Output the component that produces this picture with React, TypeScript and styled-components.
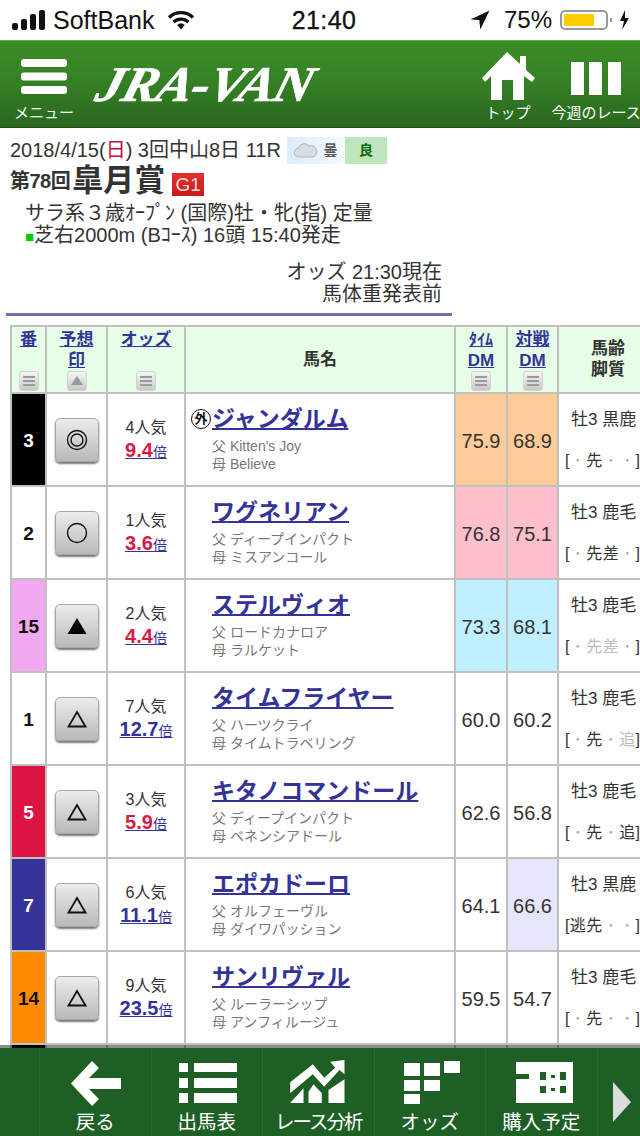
// App.tsx
import React from 'react';
import styled, { createGlobalStyle } from 'styled-components';

const GlobalStyle = createGlobalStyle`
  html, body {
    margin: 0;
    padding: 0;
    background: #fff;
    font-family: "Liberation Sans", "Noto Sans CJK JP", sans-serif;
  }
`;

const Screen = styled.div`
  width: 640px;
  height: 1136px;
  display: flex;
  flex-direction: column;
  overflow: hidden;
  color: #333;
`;

/* status bar */
const StatusBar = styled.div`
  height: 40px;
  flex: none;
  display: grid;
  grid-template-columns: 1fr auto 1fr;
  align-items: center;
  padding: 0 10px 0 12px;
  color: #111;
  font-size: 24px;
`;
const StatusLeft = styled.div`
  display: flex;
  align-items: center;
  gap: 8px;
`;
const StatusRight = styled.div`
  display: flex;
  align-items: center;
  justify-content: flex-end;
  gap: 8px;
`;
const Clock = styled.div`
  font-weight: 500;
  font-size: 25px;
  letter-spacing: 0.4px;
  -webkit-text-stroke: 0.3px #111;
  margin-left: 6px;
`;
const Carrier = styled.span`
  font-size: 25px;
  margin-right: 5px;
`;
const LocationArrow = styled.svg`
  display: block;
  fill: #111;
  margin-right: 6px;
`;
const Battery = styled.div`
  width: 48px;
  height: 20px;
  box-sizing: border-box;
  border: 2px solid #999;
  border-radius: 5px;
  padding: 2px;
`;
const BatteryFill = styled.div`
  height: 100%;
  background: #fc0;
  border-radius: 1px;
`;
const Charging = styled.svg`
  display: block;
  margin-left: -6px;
`;

/* green header */
const Header = styled.header`
  height: 88px;
  flex: none;
  box-sizing: border-box;
  display: flex;
  align-items: stretch;
  background: linear-gradient(#3b8d28 0%, #358226 45%, #2a671e 100%);
  border-top: 1px solid #6aa85a;
  border-bottom: 1px solid #1c4e14;
  color: #fff;
`;
const NavItem = styled.div<{ $w: number; $after?: number }>`
  width: ${(p) => p.$w}px;
  margin-right: ${(p) => p.$after ?? 0}px;
  flex: none;
  display: flex;
  flex-direction: column;
  align-items: center;
  justify-content: flex-end;
  padding-bottom: 5px;
  gap: 4px;
  font-size: 15px;
  line-height: 18px;
  white-space: nowrap;
`;
const NavIcon = styled.svg<{ $lift?: number }>`
  display: block;
  fill: #fff;
  margin-bottom: ${(p) => p.$lift ?? 0}px;
`;
const Logo = styled.div`
  flex: 1;
  padding: 18px 0 0 3px;
  font-family: "Liberation Serif", serif;
  font-style: italic;
  font-weight: 700;
  font-size: 50px;
  line-height: 50px;
  letter-spacing: -1px;
  white-space: nowrap;
  -webkit-text-stroke: 0.6px #fff;
`;
const LogoText = styled.span`
  display: inline-block;
  transform: skewX(-16deg) scaleX(1.07);
  transform-origin: left bottom;
`;

/* race info */
const Info = styled.section`
  flex: none;
  height: 197px;
  box-sizing: border-box;
  padding: 8px 0 0 10px;
  font-size: 20px;
  line-height: 22px;
`;
const DateRow = styled.div`
  display: flex;
  align-items: center;
  height: 28px;
  white-space: nowrap;
`;
const Sun = styled.span`
  color: #c8103c;
`;
const WeatherBadge = styled.div`
  margin-left: 6px;
  display: flex;
  height: 27px;
  font-size: 14px;
  font-weight: 700;
`;
const Sky = styled.div`
  width: 58px;
  display: flex;
  align-items: center;
  justify-content: center;
  gap: 5px;
  color: #555;
  background: linear-gradient(90deg, #dcecfa, #f6fafe);
`;
const Ground = styled.div`
  width: 42px;
  display: flex;
  align-items: center;
  justify-content: center;
  color: #0b6b0b;
  background: #bfe5bd;
`;
const TitleRow = styled.div`
  display: flex;
  align-items: center;
  height: 34px;
  font-weight: 700;
  color: #333;
`;
const Kai = styled.span`
  font-size: 20px;
  letter-spacing: -0.5px;
`;
const RaceName = styled.span`
  font-size: 31px;
  margin: 0 7px 0 2px;
`;
const Grade = styled.span`
  width: 32px;
  height: 23px;
  margin-top: 6px;
  background: linear-gradient(#e83030, #c81818);
  color: #f4dcdc;
  font-size: 19px;
  font-weight: 400;
  line-height: 23px;
  text-align: center;
`;
const Conditions = styled.div<{ $first?: boolean }>`
  padding-left: 15px;
  margin-top: ${(p) => (p.$first ? 4 : 0)}px;
  white-space: nowrap;
`;
const TurfMark = styled.span`
  color: #0c0;
  font-size: 15px;
`;
const Odds = styled.div`
  width: 432px;
  margin-top: 13px;
  text-align: right;
  line-height: 22px;
`;
const Rule = styled.hr`
  width: 446px;
  height: 3px;
  margin: 8px 0 0 -4px;
  border: 0;
  background: #6f6fab;
`;

/* table */
const TableArea = styled.div`
  flex: 1;
  min-height: 0;
  overflow: hidden;
  padding-left: 10px;
`;
const Table = styled.table`
  table-layout: fixed;
  border-collapse: collapse;
  width: 647px;
`;
const HeadCell = styled.th`
  height: 65px;
  padding: 0;
  background: #e6ffe6;
  border: 2px solid #c0c0c0;
  font-size: 17px;
  line-height: 21px;
  color: #333;
  vertical-align: top;
`;
const HeadInner = styled.div`
  height: 64px;
  display: flex;
  flex-direction: column;
  align-items: center;
  justify-content: space-between;
  padding-top: 2px;
  box-sizing: border-box;
`;
const HeadLabel = styled.div`
  height: 64px;
  display: flex;
  align-items: center;
  justify-content: center;
  text-align: center;
`;
const HeadLink = styled.a<{ $size?: number }>`
  display: block;
  color: #333399;
  text-decoration: underline;
  font-weight: 700;
  font-size: ${(p) => p.$size ?? 17}px;
  line-height: 21px;
  text-align: center;
`;
const Sort = styled.span`
  width: 20px;
  height: 20px;
  flex: none;
  display: flex;
  align-items: center;
  justify-content: center;
  border-radius: 3px;
  background: linear-gradient(#f6f6f6, #c8c8c8);
  border: 1px solid #d4d4d4;
  box-sizing: border-box;
`;
const Row = styled.tr`
  height: 93px;
`;
const Cell = styled.td`
  padding: 0;
  border: 2px solid #c0c0c0;
  text-align: center;
  vertical-align: middle;
`;
const NumberCell = styled(Cell)<{ $bg: string; $fg: string }>`
  background: ${(p) => p.$bg};
  color: ${(p) => p.$fg};
  font-size: 19px;
  font-weight: 700;
  padding-top: 2px;
`;
const MarkButton = styled.div`
  width: 44px;
  height: 44px;
  margin: 0 auto;
  box-sizing: border-box;
  display: flex;
  align-items: center;
  justify-content: center;
  border: 1px solid #a8a8a8;
  border-radius: 5px;
  background: linear-gradient(#ececec, #b9b9b9);
  box-shadow: 0 2px 2px #777;
`;
const Popularity = styled.div`
  font-size: 16px;
  line-height: 22px;
`;
const OddsLink = styled.a<{ $hot: boolean }>`
  color: #333399;
  text-decoration: underline;
  font-size: 14px;
  b {
    font-size: 20px;
    color: ${(p) => (p.$hot ? '#d81b46' : '#333399')};
  }
`;
const NameCell = styled(Cell)`
  text-align: left;
`;
const NameGrid = styled.div`
  display: grid;
  grid-template-columns: 26px 1fr;
  padding-bottom: 2px;
`;
const Foreign = styled.span`
  width: 18px;
  height: 18px;
  margin: 5px 0 0 5px;
  border: 1px solid #111;
  border-radius: 50%;
  font-size: 13px;
  font-weight: 700;
  line-height: 18px;
  text-align: center;
  color: #111;
`;
const HorseName = styled.a`
  display: block;
  margin-bottom: 4px;
  color: #333399;
  font-size: 23px;
  font-weight: 700;
  line-height: 30px;
  text-decoration: underline;
  text-underline-offset: 1px;
  white-space: nowrap;
`;
const Pedigree = styled.div`
  color: #777;
  font-size: 14px;
  line-height: 17.5px;
  white-space: nowrap;
`;
const ScoreCell = styled(Cell)<{ $bg?: string }>`
  background: ${(p) => p.$bg ?? '#fff'};
  font-size: 20px;
  padding-top: 3px;
`;
const ProfileCell = styled(Cell)`
  text-align: left;
  font-size: 16px;
  white-space: nowrap;
  overflow: hidden;
  padding-left: 6px;
`;
const Age = styled.div`
  padding-left: 6px;
  margin-bottom: 18px;
  font-size: 17px;
  line-height: 23px;
`;
const Styles = styled.div`
  display: flex;
  line-height: 23px;
`;
const Slot = styled.span<{ $faint?: boolean; $dot?: boolean }>`
  width: 16.5px;
  flex: none;
  text-align: center;
  color: ${(p) => (p.$dot ? '#aaa' : p.$faint ? '#bbb' : '#333')};
`;

/* footer */
const Footer = styled.footer`
  height: 88px;
  flex: none;
  position: relative;
  display: flex;
  background: #1d5f24;
  box-shadow: 0 -3px 0 rgba(0, 0, 0, 0.45);
  color: #fff;
`;
const FooterCap = styled.div`
  width: 39px;
  flex: none;
  border-right: 1px solid #2a6c30;
`;
const FooterItem = styled.div`
  width: 111.5px;
  flex: none;
  display: flex;
  flex-direction: column;
  align-items: center;
  box-sizing: border-box;
  border-right: 1px solid #2a6c30;
  padding-top: 12px;
`;
const FooterIcon = styled.svg`
  display: block;
  width: 60px;
  height: 46px;
  fill: #fff;
  overflow: visible;
`;
const FooterLabel = styled.span<{ $tight?: boolean }>`
  margin-top: 4px;
  font-size: 19.5px;
  line-height: 24px;
  letter-spacing: ${(p) => (p.$tight ? '-2px' : '0')};
  white-space: nowrap;
`;
const FooterMore = styled.div`
  flex: 1;
  display: flex;
  align-items: center;
  padding: 20px 0 0 15px;
`;

const SortLines = () => (
  <svg width="14" height="12" viewBox="0 0 14 12">
    <path d="M1 1h12v2H1zM1 5h12v2H1zM1 9h12v2H1z" fill="#9a9a9a" />
  </svg>
);
const SortUp = () => (
  <svg width="14" height="12" viewBox="0 0 14 12">
    <path d="M7 1l6 9H1z" fill="#9a9a9a" />
  </svg>
);

type Mark = 'double' | 'circle' | 'solid' | 'open';
const MarkIcon = ({ mark }: { mark: Mark }) => (
  <svg width="26" height="26" viewBox="0 0 26 26" fill="none" stroke="#111" strokeWidth="1.4">
    {mark === 'double' && (
      <>
        <circle cx="13" cy="13" r="9.5" />
        <circle cx="13" cy="13" r="6" />
      </>
    )}
    {mark === 'circle' && <circle cx="13" cy="13" r="9.5" />}
    {mark === 'solid' && <path d="M13 5l9.500 16h-19z" fill="#000" stroke="none" />}
    {mark === 'open' && <path d="M13 6l8.500 14.500h-17z" strokeWidth="1.8" />}
  </svg>
);

type Horse = {
  no: number;
  bg: string;
  fg: string;
  mark: Mark;
  pop: number;
  odds: string;
  foreign?: boolean;
  name: string;
  sire: string;
  dam: string;
  time: string;
  timeBg?: string;
  vs: string;
  vsBg?: string;
  age: string;
  run: (string | null)[];
  faint?: string[];
};

const horses: Horse[] = [
  { no: 3, bg: '#000', fg: '#fff', mark: 'double', pop: 4, odds: '9.4', foreign: true, name: 'ジャンダルム', sire: "Kitten's Joy", dam: 'Believe', time: '75.9', timeBg: '#ffcc99', vs: '68.9', vsBg: '#ffcc99', age: '牡3 黒鹿', run: [null, '先', null, null] },
  { no: 2, bg: '#fff', fg: '#111', mark: 'circle', pop: 1, odds: '3.6', name: 'ワグネリアン', sire: 'ディープインパクト', dam: 'ミスアンコール', time: '76.8', timeBg: '#ffc0cb', vs: '75.1', vsBg: '#ffc0cb', age: '牡3 鹿毛', run: [null, '先', '差', null] },
  { no: 15, bg: '#f0a8f0', fg: '#111', mark: 'solid', pop: 2, odds: '4.4', name: 'ステルヴィオ', sire: 'ロードカナロア', dam: 'ラルケット', time: '73.3', timeBg: '#c0f0ff', vs: '68.1', vsBg: '#c0f0ff', age: '牡3 鹿毛', run: [null, '先', '差', null], faint: ['先', '差'] },
  { no: 1, bg: '#fff', fg: '#111', mark: 'open', pop: 7, odds: '12.7', name: 'タイムフライヤー', sire: 'ハーツクライ', dam: 'タイムトラベリング', time: '60.0', vs: '60.2', age: '牡3 鹿毛', run: [null, '先', null, '追'], faint: ['追'] },
  { no: 5, bg: '#dc1441', fg: '#fff', mark: 'open', pop: 3, odds: '5.9', name: 'キタノコマンドール', sire: 'ディープインパクト', dam: 'ベネンシアドール', time: '62.6', vs: '56.8', age: '牡3 鹿毛', run: [null, '先', null, '追'] },
  { no: 7, bg: '#333399', fg: '#fff', mark: 'open', pop: 6, odds: '11.1', name: 'エポカドーロ', sire: 'オルフェーヴル', dam: 'ダイワパッション', time: '64.1', vs: '66.6', vsBg: '#e6e6fa', age: '牡3 黒鹿', run: ['逃', '先', null, null] },
  { no: 14, bg: '#ff8c00', fg: '#111', mark: 'open', pop: 9, odds: '23.5', name: 'サンリヴァル', sire: 'ルーラーシップ', dam: 'アンフィルージュ', time: '59.5', vs: '54.7', age: '牡3 鹿毛', run: [null, '先', null, null] },
];

// under 10x the odds are shown in red
const isHot = (h: Horse) => parseFloat(h.odds) < 10;

const App = () => {
  return (
    <Screen>
      <GlobalStyle />
      <StatusBar>
        <StatusLeft>
          <svg width="33" height="20" viewBox="0 0 33 20">
            <rect x="0" y="13" width="6" height="7" rx="2" fill="#111" />
            <rect x="9" y="9" width="6" height="11" rx="2" fill="#111" />
            <rect x="18" y="4" width="6" height="16" rx="2" fill="#111" />
            <rect x="27" y="0" width="6" height="20" rx="2" fill="#111" />
          </svg>
          <Carrier>SoftBank</Carrier>
          <svg width="28" height="20" viewBox="0 0 28 20" fill="none" stroke="#111" strokeWidth="3.2">
            <path d="M2 7.500a17 17 0 0 1 24 0" />
            <path d="M6.500 12a11 11 0 0 1 15 0" />
            <path d="M14 19.500l-3.800-4.600a6 6 0 0 1 7.600 0z" fill="#111" stroke="none" />
          </svg>
        </StatusLeft>
        <Clock>21:40</Clock>
        <StatusRight>
          <LocationArrow width="20" height="20" viewBox="0 0 20 20">
            <path d="M19.500 0.500L0.500 9.500l8.800 0.600 1 9.400z" />
          </LocationArrow>
          <span>75%</span>
          <Battery>
            <BatteryFill style={{ width: '75%' }} />
          </Battery>
          <Charging width="20" height="20" viewBox="0 0 20 20">
            <path d="M0 8h2v4H0z" fill="#999" />
            <path d="M15 0L10 11h4l-2 9 7-12h-4z" fill="#111" />
          </Charging>
        </StatusRight>
      </StatusBar>

      <Header>
        <NavItem $w={88}>
          <NavIcon width="46" height="35" viewBox="0 0 46 35" $lift={6}>
            <rect x="0" y="0" width="46" height="8" rx="3" />
            <rect x="0" y="13.500" width="46" height="8" rx="3" />
            <rect x="0" y="27" width="46" height="8" rx="3" />
          </NavIcon>
          <span>メニュー</span>
        </NavItem>
        <Logo>
          <LogoText>JRA-VAN</LogoText>
        </Logo>
        <NavItem $w={64} $after={12}>
          <NavIcon width="53" height="48" viewBox="0 0 53 48">
            <path d="M25 0l13 12V4h6v14l9 8-3 4-8-6v24H31V28H20v20H9V24l-6 6-3-4z" />
          </NavIcon>
          <span>トップ</span>
        </NavItem>
        <NavItem $w={88}>
          <NavIcon width="50" height="33" viewBox="0 0 50 33" $lift={5}>
            <rect x="0" y="0" width="13" height="33" />
            <rect x="18" y="0" width="13" height="33" />
            <rect x="37" y="0" width="13" height="33" />
          </NavIcon>
          <span>今週のレース</span>
        </NavItem>
      </Header>

      <Info>
        <DateRow>
          <span>
            2018/4/15(<Sun>日</Sun>) 3回中山8日 11R
          </span>
          <WeatherBadge>
            <Sky>
              <svg width="24" height="16" viewBox="0 0 24 16">
                <path d="M5 15a4.500 4.500 0 0 1-.5-9A6 6 0 0 1 15 4a5.500 5.500 0 0 1 4 11z" fill="#d8dde2" stroke="#aab2ba" />
              </svg>
              <span>曇</span>
            </Sky>
            <Ground>良</Ground>
          </WeatherBadge>
        </DateRow>
        <TitleRow>
          <Kai>第78回</Kai>
          <RaceName>皐月賞</RaceName>
          <Grade>G1</Grade>
        </TitleRow>
        <Conditions $first>サラ系３歳ｵｰﾌﾟﾝ (国際)牡・牝(指) 定量</Conditions>
        <Conditions>
          <TurfMark>■</TurfMark>芝右2000m (Bｺｰｽ) 16頭 15:40発走
        </Conditions>
        <Odds>
          オッズ 21:30現在
          <br />
          馬体重発表前
        </Odds>
        <Rule />
      </Info>

      <TableArea>
        <Table>
          <colgroup>
            <col width="35" />
            <col width="61" />
            <col width="78" />
            <col width="270" />
            <col width="52" />
            <col width="51" />
            <col width="100" />
          </colgroup>
          <thead>
            <tr>
              <HeadCell>
                <HeadInner>
                  <HeadLink>番</HeadLink>
                  <Sort><SortLines /></Sort>
                </HeadInner>
              </HeadCell>
              <HeadCell>
                <HeadInner>
                  <HeadLink>予想<br />印</HeadLink>
                  <Sort><SortUp /></Sort>
                </HeadInner>
              </HeadCell>
              <HeadCell>
                <HeadInner>
                  <HeadLink>オッズ</HeadLink>
                  <Sort><SortLines /></Sort>
                </HeadInner>
              </HeadCell>
              <HeadCell>
                <HeadLabel>馬名</HeadLabel>
              </HeadCell>
              <HeadCell>
                <HeadInner>
                  <div>
                    <HeadLink $size={16}>ﾀｲﾑ</HeadLink>
                    <HeadLink>DM</HeadLink>
                  </div>
                  <Sort><SortLines /></Sort>
                </HeadInner>
              </HeadCell>
              <HeadCell>
                <HeadInner>
                  <div>
                    <HeadLink>対戦</HeadLink>
                    <HeadLink>DM</HeadLink>
                  </div>
                  <Sort><SortLines /></Sort>
                </HeadInner>
              </HeadCell>
              <HeadCell>
                <HeadLabel>馬齢<br />脚質</HeadLabel>
              </HeadCell>
            </tr>
          </thead>
          <tbody>
            {horses.map((h) => (
              <Row key={h.no}>
                <NumberCell $bg={h.bg} $fg={h.fg}>{h.no}</NumberCell>
                <Cell>
                  <MarkButton>
                    <MarkIcon mark={h.mark} />
                  </MarkButton>
                </Cell>
                <Cell>
                  <Popularity>{h.pop}人気</Popularity>
                  <OddsLink $hot={isHot(h)}>
                    <b>{h.odds}</b>倍
                  </OddsLink>
                </Cell>
                <NameCell>
                  <NameGrid>
                    {h.foreign ? <Foreign>外</Foreign> : <span />}
                    <div>
                      <HorseName>{h.name}</HorseName>
                      <Pedigree>父 {h.sire}</Pedigree>
                      <Pedigree>母 {h.dam}</Pedigree>
                    </div>
                  </NameGrid>
                </NameCell>
                <ScoreCell $bg={h.timeBg}>{h.time}</ScoreCell>
                <ScoreCell $bg={h.vsBg}>{h.vs}</ScoreCell>
                <ProfileCell>
                  <Age>{h.age}</Age>
                  <Styles>
                    <span>[</span>
                    {h.run.map((s, i) =>
                      s ? (
                        <Slot key={i} $faint={h.faint?.includes(s)}>{s}</Slot>
                      ) : (
                        <Slot key={i} $dot>･</Slot>
                      ),
                    )}
                    <span>]</span>
                  </Styles>
                </ProfileCell>
              </Row>
            ))}
            <Row>
              <NumberCell $bg="#000" $fg="#fff" />
              <Cell />
              <Cell />
              <Cell />
              <Cell />
              <Cell />
              <Cell />
            </Row>
          </tbody>
        </Table>
      </TableArea>

      <Footer>
        <FooterCap />
        <FooterItem>
          <FooterIcon viewBox="0 0 60 46">
            <path d="M27 1l7 7-10 10h32v11H24l10 10-7 7L6 23.500z" />
          </FooterIcon>
          <FooterLabel>戻る</FooterLabel>
        </FooterItem>
        <FooterItem>
          <FooterIcon viewBox="0 0 60 46">
            <path d="M2 3h9v9H2zM17 3h43v9H17zM2 18h9v10H2zM17 18h43v10H17zM2 33h9v10H2zM17 33h43v10H17z" />
          </FooterIcon>
          <FooterLabel>出馬表</FooterLabel>
        </FooterItem>
        <FooterItem>
          <FooterIcon viewBox="0 0 60 46">
            <path d="M2.200 22.300L24.800 4.300l11.400 13.400 11-10-5-6L56.500 0v14.300l-5-4.300-15.300 16.700-11.400-12.400L2.200 33.300z" />
            <path d="M2.200 43l13.300-14.700V43zM20.500 43V31.700l5-7.400 8.300 9V43zM40.500 43V30l16-10.700V43z" />
          </FooterIcon>
          <FooterLabel $tight>レース分析</FooterLabel>
        </FooterItem>
        <FooterItem>
          <FooterIcon viewBox="0 0 60 46">
            <path d="M4 3h16v13H4zM24 3h16v13H24zM44 1h16v12H44zM4 20h16v11H4zM24 20h16v11H24zM4 34h16v10H4z" />
          </FooterIcon>
          <FooterLabel>オッズ</FooterLabel>
        </FooterItem>
        <FooterItem>
          <FooterIcon viewBox="0 0 60 46">
            <path
              fillRule="evenodd"
              d="M5 2h57v41H5V19h13v-5H5zM29 12v8h6v-8zM49 12v8h6v-8zM29 26v7h6v-7zM49 26v7h6v-7zM40 15v3h4v-3zM40 28v3h4v-3z"
            />
          </FooterIcon>
          <FooterLabel>購入予定</FooterLabel>
        </FooterItem>
        <FooterMore>
          <svg width="18" height="44" viewBox="0 0 18 44">
            <path d="M0 2l18 20L0 42z" fill="#dcdcdc" />
          </svg>
        </FooterMore>
      </Footer>
    </Screen>
  );
};

export default App;
